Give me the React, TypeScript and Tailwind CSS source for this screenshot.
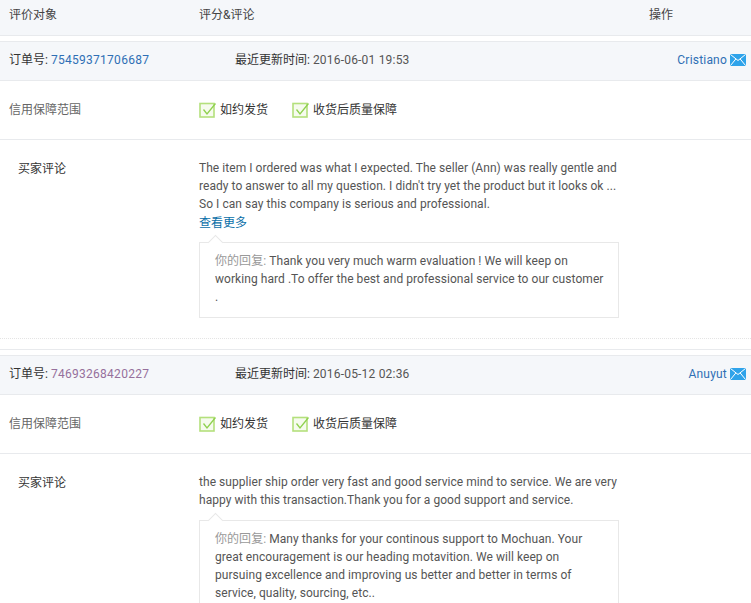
const font = "font-['Roboto','Noto_Sans_CJK_SC',sans-serif]";

function CheckIcon() {
  return (
    <svg width="18" height="16" viewBox="0 0 18 16" fill="none" className="shrink-0">
      <rect x="1" y="1.5" width="14" height="13.5" fill="#f6fbee" stroke="#b4e07c" strokeWidth="1.6" />
      <path d="M4.5 7.5L8 12L16.5 1.5" stroke="#8fd14f" strokeWidth="1.3" fill="none" />
    </svg>
  );
}

function MailIcon() {
  return (
    <svg width="16" height="12" viewBox="0 0 16 12" className="shrink-0">
      <rect width="16" height="12" rx="1" fill="#2fa3ea" />
      <path d="M0.5 0.5L8 6.5L15.5 0.5M0.5 11.5L5.8 5M15.5 11.5L10.2 5" stroke="#ffffff" strokeWidth="1" fill="none" />
    </svg>
  );
}

function Order({ no, time, name, color }: { no: string; time: string; name: string; color: string }) {
  return (
    <div className="flex h-10 items-center justify-between border-y border-[#e8eaed] bg-[#f5f7fa] pb-0.5 pl-[9px] pr-[5px]">
      <div className="flex items-center">
        <div className="w-[226px] text-[#333]">
          订单号: <span className={`${color} tracking-[0.28px]`}>{no}</span>
        </div>
        <div className="text-[#333]">
          最近更新时间: <span className="tracking-[0.2px] text-[#555]">{time}</span>
        </div>
      </div>
      <div className="flex items-center gap-[3px] tracking-[0.2px] text-[#2f6fb5]">
        {name}
        <MailIcon />
      </div>
    </div>
  );
}

function Guarantee() {
  return (
    <div className="flex h-[59px] items-center border-b border-[#e8eaed] pl-[9px]">
      <div className="w-[190px] text-[#666]">信用保障范围</div>
      <div className="flex items-center gap-[3px] text-[#333]">
        <CheckIcon />
        如约发货
      </div>
      <div className="ml-6 flex items-center gap-[3px] text-[#333]">
        <CheckIcon />
        收货后质量保障
      </div>
    </div>
  );
}

function Reply({ lines }: { lines: string[] }) {
  return (
    <div className="relative w-[420px] border border-[#e8e8e8] bg-white pb-[11px] pl-[15px] pr-[10px] pt-[9px] tracking-[0.06px] text-[#555]">
      <div className="absolute left-[10px] top-[-6px] h-[11px] w-[11px] rotate-45 border-l border-t border-[#e8e8e8] bg-white" />
      <div className="relative">
        {lines.map((line, i) => (
          <div key={i} className="whitespace-nowrap">
            {i === 0 && <span className="text-[#999]">你的回复: </span>}
            {line}
          </div>
        ))}
      </div>
    </div>
  );
}

function Comment({ text, more, reply }: { text: string[]; more?: boolean; reply: string[] }) {
  return (
    <div className="flex pl-[18px] pt-5">
      <div className="w-[181px] text-[#333]">买家评论</div>
      <div>
        <div className="-mt-px tracking-[0.05px] text-[#555]">
          {text.map((t, i) => (
            <div key={i} className="whitespace-nowrap">{t}</div>
          ))}
        </div>
        {more && <div className="mt-px text-[#0b6fa8]">查看更多</div>}
        <div className={more ? "mt-[10px]" : "mt-[11px]"}>
          <Reply lines={reply} />
        </div>
      </div>
    </div>
  );
}

export default function App() {
  return (
    <div className={`${font} h-[603px] w-[751px] overflow-hidden bg-white text-xs leading-[18px]`}>
      {/* Table head */}
      <div className="flex h-9 items-start border-b border-[#e8eaed] bg-[#f5f7fa] pl-[9px] pt-1.5 text-[#444]">
        <div className="w-[190px]">评价对象</div>
        <div className="w-[450px]">评分&amp;评论</div>
        <div>操作</div>
      </div>

      <div className="mt-[5px]">
        <Order no="75459371706687" time="2016-06-01 19:53" name="Cristiano" color="text-[#2f6fb5]" />
        <Guarantee />
        <div className="h-[199px] border-b border-dotted border-[#e4e4e4]">
          <Comment
            more
            text={[
              "The item I ordered was what I expected. The seller (Ann) was really gentle and",
              "ready to answer to all my question. I didn't try yet the product but it looks ok ...",
              "So I can say this company is serious and professional.",
            ]}
            reply={[
              "Thank you very much warm evaluation ! We will keep on",
              "working hard .To offer the best and professional service to our customer",
              ".",
            ]}
          />
        </div>
      </div>

      <div className="mt-[10px] h-px bg-[#e8eaed]" />

      <div className="mt-[5px]">
        <Order no="74693268420227" time="2016-05-12 02:36" name="Anuyut" color="text-[#96709c]" />
        <Guarantee />
        <Comment
          text={[
            "the supplier ship order very fast and good service mind to service. We are very",
            "happy with this transaction.Thank you for a good support and service.",
          ]}
          reply={[
            "Many thanks for your continous support to Mochuan. Your",
            "great encouragement is our heading motavition. We will keep on",
            "pursuing excellence and improving us better and better in terms of",
            "service, quality, sourcing, etc..",
          ]}
        />
      </div>
    </div>
  );
}
